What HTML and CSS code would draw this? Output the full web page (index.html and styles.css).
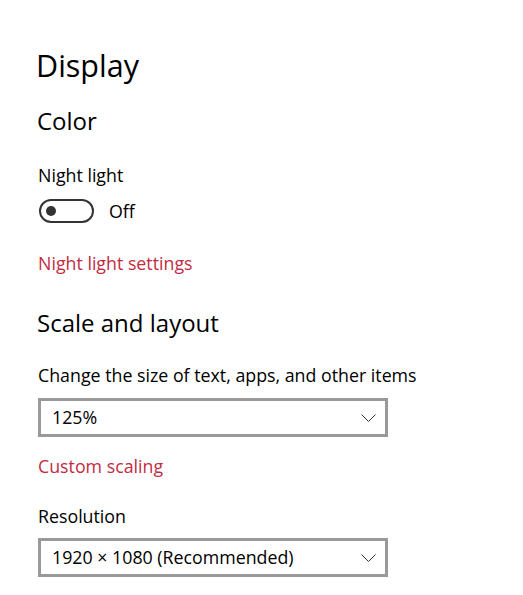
FILE: index.html
```html
<!DOCTYPE html>
<html lang="en">
<head>
<meta charset="utf-8">
<title>Display</title>
<link rel="stylesheet" href="styles.css">
</head>
<body>
<main class="page">
  <h1 class="title">Display</h1>
  <h2 class="section section-color">Color</h2>
  <div class="label label-night">Night light</div>
  <div class="toggle-row">
    <span class="toggle"><span class="knob"></span></span>
    <span class="toggle-text">Off</span>
  </div>
  <a class="link link-night" href="#">Night light settings</a>
  <h2 class="section section-scale">Scale and layout</h2>
  <div class="label label-size">Change the size of text, apps, and other items</div>
  <div class="dropdown dropdown-scale">
    <span class="dropdown-value">125%</span>
    <svg class="chevron" width="15" height="8" viewBox="0 0 15 8"><path d="M0.5 0.5 L7.5 7.5 L14.5 0.5" fill="none" stroke="#333" stroke-width="1"/></svg>
  </div>
  <a class="link link-custom" href="#">Custom scaling</a>
  <div class="label label-res">Resolution</div>
  <div class="dropdown dropdown-res">
    <span class="dropdown-value">1920 × 1080 (Recommended)</span>
    <svg class="chevron" width="15" height="8" viewBox="0 0 15 8"><path d="M0.5 0.5 L7.5 7.5 L14.5 0.5" fill="none" stroke="#333" stroke-width="1"/></svg>
  </div>
</main>
</body>
</html>
```

FILE: styles.css
```css
html, body {
  margin: 0;
  padding: 0;
  background: #ffffff;
}

body {
  font-family: "Open Sans", "Noto Sans", "Liberation Sans", sans-serif;
  color: #000000;
  font-size: 17.8px;
  line-height: 24px;
}

.page {
  padding: 45px 0 0 38px;
  display: flex;
  flex-direction: column;
  align-items: flex-start;
}

.title {
  margin: 0 0 0 -2px;
  font-size: 30.5px;
  line-height: 40px;
  font-weight: 400;
}

.section {
  margin: 0;
  font-size: 24px;
  line-height: 32px;
  font-weight: 400;
  margin-left: -1px;
}

.section-color { margin-top: 20px; }
.section-scale { margin-top: 32px; }

.label { margin: 0; }
.label-night { margin-top: 26px; }
.label-size { margin-top: 24px; }
.label-res { margin-top: 26px; }

.toggle-row {
  margin-top: 12px;
  display: flex;
  align-items: center;
  height: 24px;
}

.toggle {
  box-sizing: border-box;
  width: 55px;
  height: 24px;
  border: 2px solid #333333;
  border-radius: 12px;
  display: flex;
  align-items: center;
  padding-left: 5px;
  margin-left: 1px;
}

.knob {
  width: 10px;
  height: 10px;
  border-radius: 50%;
  background: #333333;
}

.toggle-text {
  margin-left: 15px;
}

.link {
  color: #c22c3f;
  text-decoration: none;
}

.link-night { margin-top: 28px; }
.link-custom { margin-top: 17px; }

.dropdown {
  box-sizing: border-box;
  width: 350px;
  height: 39px;
  border: 3px solid #999999;
  display: flex;
  align-items: center;
  justify-content: space-between;
  padding: 0 9px 2px 11px;
}

.dropdown-scale { margin-top: 11px; }
.dropdown-res { margin-top: 10px; }

.chevron {
  display: block;
  margin-top: 2px;
}
```
